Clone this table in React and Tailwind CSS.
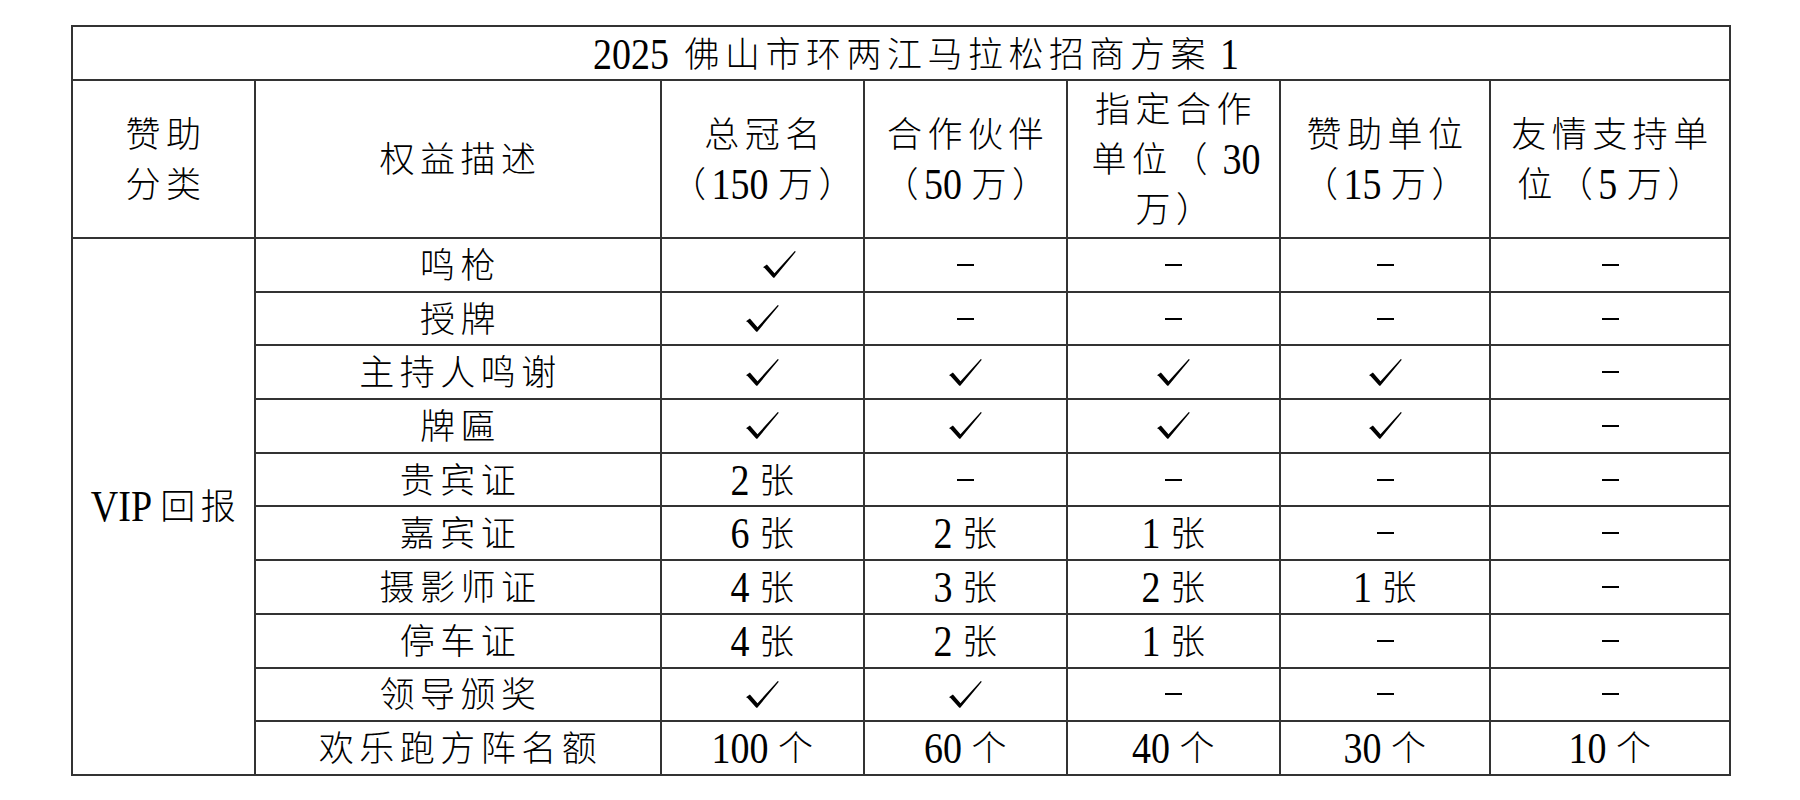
import React from "react";

const LAT = "inline-block scale-y-[1.16] font-['Liberation_Serif',serif] text-[38px] tracking-normal whitespace-pre";
const CJK = "font-['Noto_Sans_CJK_SC',sans-serif] text-[35px] tracking-[5.5px] font-light";
const TD = "border-2 border-[#333] p-0 text-center align-middle";

function Runs({ s }) {
  const parts = s.split(/([0-9A-Za-z ]+)/).filter((p) => p.length > 0);
  return parts.map((p, i) =>
    /^[0-9A-Za-z ]+$/.test(p) ? (
      <span key={i} className={LAT}>
        {p}
      </span>
    ) : (
      <span key={i} className={CJK}>
        {p}
      </span>
    )
  );
}

function Line({ s }) {
  return (
    <div className="h-[50px] whitespace-nowrap pl-[5px] text-center font-['Noto_Sans_CJK_SC',sans-serif] text-[35px] leading-[46px] text-black">
      <Runs s={s} />
    </div>
  );
}

function Check() {
  return (
    <svg width="33" height="27" viewBox="0 0 33 27" className="block">
      <path
        d="M0 16.3 L3.9 13.5 L11.5 22.3 L31.8 0 L32.8 0.8 L11.3 26.8 L10.3 26.8 L1.5 17.1 Z"
        fill="#000"
      />
    </svg>
  );
}

function Dash() {
  return <div className="h-[2px] w-[17px] bg-black" />;
}

function DataCell({ v }) {
  if (v === "C" || v === "C1") {
    return (
      <td className={TD}>
        <div
          className={
            v === "C1"
              ? "flex h-[50px] items-center justify-center pl-[34px]"
              : "flex h-[50px] items-center justify-center"
          }
        >
          <Check />
        </div>
      </td>
    );
  }
  if (v === "D") {
    return (
      <td className={TD}>
        <div className="flex h-[50px] items-center justify-center">
          <Dash />
        </div>
      </td>
    );
  }
  return (
    <td className={TD}>
      <Line s={v} />
    </td>
  );
}

const rows = [
  ["鸣枪", ["C1", "D", "D", "D", "D"]],
  ["授牌", ["C", "D", "D", "D", "D"]],
  ["主持人鸣谢", ["C", "C", "C", "C", "D"]],
  ["牌匾", ["C", "C", "C", "C", "D"]],
  ["贵宾证", ["2 张", "D", "D", "D", "D"]],
  ["嘉宾证", ["6 张", "2 张", "1 张", "D", "D"]],
  ["摄影师证", ["4 张", "3 张", "2 张", "1 张", "D"]],
  ["停车证", ["4 张", "2 张", "1 张", "D", "D"]],
  ["领导颁奖", ["C", "C", "D", "D", "D"]],
  ["欢乐跑方阵名额", ["100 个", "60 个", "40 个", "30 个", "10 个"]],
];

export default function App() {
  return (
    <div className="h-[800px] w-[1800px] bg-white pl-[71px] pt-[25px] text-black">
      <table className="w-[1658px] table-fixed border-collapse">
        <colgroup>
          <col className="w-[183px]" />
          <col className="w-[406px]" />
          <col className="w-[203px]" />
          <col className="w-[203px]" />
          <col className="w-[213px]" />
          <col className="w-[210px]" />
          <col className="w-[240px]" />
        </colgroup>
        <tbody>
          <tr className="h-[54px]">
            <td colSpan={7} className={TD + " pl-[30px]"}>
              <div className="whitespace-nowrap text-center font-['Noto_Sans_CJK_SC',sans-serif] text-[35px] leading-[46px]">
                <span className={LAT}>2025 </span>
                <span className={CJK + " ml-[6px]"}>佛山市环两江马拉松招商方案</span>
                <span className={LAT + " ml-[9px]"}>1</span>
              </div>
            </td>
          </tr>
          <tr className="h-[158px]">
            <td className={TD}>
              <Line s="赞助" />
              <Line s="分类" />
            </td>
            <td className={TD}>
              <Line s="权益描述" />
            </td>
            <td className={TD}>
              <Line s="总冠名" />
              <Line s="（150 万）" />
            </td>
            <td className={TD}>
              <Line s="合作伙伴" />
              <Line s="（50 万）" />
            </td>
            <td className={TD}>
              <Line s="指定合作" />
              <Line s="单位（ 30" />
              <Line s="万）" />
            </td>
            <td className={TD}>
              <Line s="赞助单位" />
              <Line s="（15 万）" />
            </td>
            <td className={TD}>
              <Line s="友情支持单" />
              <Line s="位（5 万）" />
            </td>
          </tr>
          {rows.map(([label, vals], i) => (
            <tr key={label} className="h-[53.7px]">
              {i === 0 && (
                <td rowSpan={10} className={TD}>
                  <Line s="VIP 回报" />
                </td>
              )}
              <td className={TD}>
                <Line s={label} />
              </td>
              {vals.map((v, j) => (
                <DataCell key={j} v={v} />
              ))}
            </tr>
          ))}
        </tbody>
      </table>
    </div>
  );
}
